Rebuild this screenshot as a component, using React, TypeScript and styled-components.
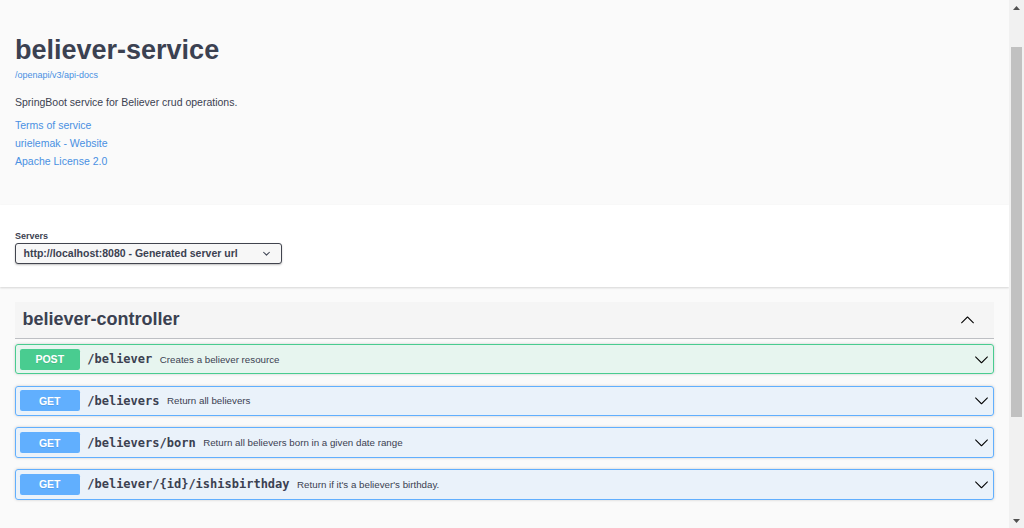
import React from 'react';
import styled, { createGlobalStyle } from 'styled-components';

const GlobalStyle = createGlobalStyle`
  html, body { margin: 0; padding: 0; background: #fafafa; }
  body { font-family: "Liberation Sans", Arial, sans-serif; color: #3b4151; }
  * { box-sizing: border-box; }
`;

const SANS = `"Liberation Sans", Arial, sans-serif`;
const MONO = `"DejaVu Sans Mono", "Liberation Mono", monospace`;

const Viewport = styled.div`
  height: 100vh;
  display: flex;
  overflow: hidden;
  font-family: ${SANS};
`;

const Main = styled.main`
  flex: 1;
  min-width: 0;
  overflow: hidden;
  background: #fafafa;
`;

const Wrapper = styled.div`
  padding: 0 15px;
`;

const Info = styled.section`
  padding: 35px 0 34.6px;
`;

const Title = styled.h2`
  margin: 0;
  font-size: 27px;
  line-height: 31px;
  font-weight: 700;
  color: #3b4151;
`;

const UrlLink = styled.a`
  display: block;
  margin-top: 3.9px;
  font-size: 9px;
  line-height: 11px;
  color: #4990e2;
  text-decoration: none;
`;

const Description = styled.p`
  margin: 12.5px 0 0;
  font-size: 10.5px;
  line-height: 18px;
  color: #3b4151;
`;

const InfoLinks = styled.div`
  margin-top: 5px;
  display: flex;
  flex-direction: column;
`;

const InfoLink = styled.a`
  font-size: 10.5px;
  line-height: 18px;
  color: #4990e2;
  text-decoration: none;
  align-self: flex-start;
`;

const SchemeContainer = styled.section`
  background: #fff;
  box-shadow: 0 1px 2px 0 rgba(0, 0, 0, 0.15);
  padding: 26.4px 0 22.6px;
  margin-bottom: 15px;
`;

const ServersLabel = styled.span`
  display: block;
  font-size: 9px;
  line-height: 10px;
  font-weight: 700;
  color: #3b4151;
`;

const SelectBox = styled.div`
  margin-top: 2px;
  width: 267px;
  height: 21px;
  border: 1.5px solid #41444e;
  border-radius: 3px;
  background: #f7f7f7;
  box-shadow: 0 1px 2px 0 rgba(0, 0, 0, 0.25);
  padding: 0 7.5px 1px;
  display: flex;
  align-items: center;
  justify-content: space-between;
  font-size: 10.5px;
  font-weight: 700;
  color: #3b4151;
`;

const TagSection = styled.section``;

const TagHeader = styled.div`
  display: flex;
  align-items: center;
  justify-content: space-between;
  padding: 7.5px 15px 7.5px 7.5px;
  margin-bottom: 5px;
  background: #f5f5f5;
  border-bottom: 1px solid rgba(59, 65, 81, 0.3);
`;

const TagTitle = styled.h3`
  margin: 0;
  font-size: 18px;
  font-weight: 700;
  color: #3b4151;
`;

const ExpandButton = styled.button`
  border: none;
  background: none;
  padding: 0 4.5px;
  display: flex;
  align-items: center;
`;

const Opblock = styled.div<{ $color: string; $tint: string }>`
  margin-bottom: 11.25px;
  border: 1px solid ${(p) => p.$color};
  border-radius: 3px;
  background: ${(p) => p.$tint};
  box-shadow: 0 0 3px rgba(0, 0, 0, 0.19);
`;

const Summary = styled.div`
  display: flex;
  align-items: center;
  padding: 3.75px;
`;

const Method = styled.span<{ $color: string }>`
  min-width: 60px;
  padding: 4.5px 0;
  border-radius: 2.25px;
  background: ${(p) => p.$color};
  color: #fff;
  font-size: 10.5px;
  font-weight: 700;
  text-align: center;
  text-shadow: 0 1px 0 rgba(0, 0, 0, 0.1);
`;

const Path = styled.span`
  padding: 0 7.5px;
  font-family: ${MONO};
  font-size: 12px;
  font-weight: 700;
  color: #3b4151;
`;

const OpDesc = styled.span`
  flex: 1;
  font-size: 9.75px;
  color: #3b4151;
`;

/* Classic window scrollbar (drawn, since the page is shown scrolled) */
const ScrollBar = styled.aside`
  width: 15px;
  flex: none;
  background: #f1f1f1;
  display: flex;
  flex-direction: column;
`;

const ScrollArrow = styled.div`
  height: 15px;
  display: flex;
  align-items: center;
  justify-content: center;
`;

const ScrollTrack = styled.div`
  flex: 1;
  display: flex;
  flex-direction: column;
  padding: 0 2px;
`;

const ScrollThumb = styled.div`
  background: #c1c1c1;
  width: 11px;
`;

const ArrowDown = () => (
  <svg width={15} height={15} viewBox="0 0 20 20" fill="#000" aria-hidden="true">
    <path d="M17.418 6.109c.272-.268.709-.268.979 0s.271.701 0 .969l-7.908 7.83c-.27.268-.707.268-.979 0l-7.908-7.83c-.27-.268-.27-.701 0-.969.271-.268.709-.268.979 0L10 13.25l7.418-7.141z" />
  </svg>
);

const ArrowUp = () => (
  <svg width={15} height={15} viewBox="0 0 20 20" fill="#000" aria-hidden="true">
    <path d="M17.418 14.908c.272.268.709.268.979 0s.271-.701 0-.969l-7.908-7.83c-.27-.268-.707-.268-.979 0l-7.908 7.83c-.27.268-.27.701 0 .969.271.268.709.268.979 0L10 7.767l7.418 7.141z" />
  </svg>
);

const SelectArrow = () => (
  <svg width={15} height={15} viewBox="0 0 20 20" fill="#3b4151" aria-hidden="true">
    <path d="M13.418 7.859a.695.695 0 01.978 0 .68.68 0 010 .969l-3.908 3.83a.697.697 0 01-.979 0l-3.908-3.83a.68.68 0 010-.969.695.695 0 01.978 0L10 11l3.418-3.141z" />
  </svg>
);

const Triangle = ({ up }: { up?: boolean }) => (
  <svg width={7} height={4} viewBox="0 0 7 4" fill="#505050" aria-hidden="true">
    <path d={up ? 'M3.5 0L7 4H0z' : 'M0 0h7L3.5 4z'} />
  </svg>
);

type Op = { method: 'POST' | 'GET'; path: string; desc: string };

const ops: Op[] = [
  { method: 'POST', path: '/believer', desc: 'Creates a believer resource' },
  { method: 'GET', path: '/believers', desc: 'Return all believers' },
  { method: 'GET', path: '/believers/born', desc: 'Return all believers born in a given date range' },
  { method: 'GET', path: '/believer/{id}/ishisbirthday', desc: "Return if it's a believer's birthday." },
];

const palette = {
  POST: { color: '#49cc90', tint: 'rgba(73,204,144,.1)' },
  GET: { color: '#61affe', tint: 'rgba(97,175,254,.1)' },
};

// scroll state of the documented page
const scroll = { top: 45, docHeight: 709, view: 528, track: 498 };

export default function App() {
  const thumbOffset = (scroll.top / scroll.docHeight) * scroll.track;
  const thumbLength = (scroll.view / scroll.docHeight) * scroll.track;

  return (
    <>
      <GlobalStyle />
      <Viewport>
        <Main>
          <Wrapper>
            <Info>
              <Title>believer-service</Title>
              <UrlLink href="#">/openapi/v3/api-docs</UrlLink>
              <Description>SpringBoot service for Believer crud operations.</Description>
              <InfoLinks>
                <InfoLink href="#">Terms of service</InfoLink>
                <InfoLink href="#">urielemak - Website</InfoLink>
                <InfoLink href="#">Apache License 2.0</InfoLink>
              </InfoLinks>
            </Info>
          </Wrapper>
          <SchemeContainer>
            <Wrapper>
              <ServersLabel>Servers</ServersLabel>
              <SelectBox>
                <span>http://localhost:8080 - Generated server url</span>
                <SelectArrow />
              </SelectBox>
            </Wrapper>
          </SchemeContainer>
          <Wrapper>
            <TagSection>
              <TagHeader>
                <TagTitle>believer-controller</TagTitle>
                <ExpandButton>
                  <ArrowUp />
                </ExpandButton>
              </TagHeader>
              {ops.map((op) => (
                <Opblock key={op.path} $color={palette[op.method].color} $tint={palette[op.method].tint}>
                  <Summary>
                    <Method $color={palette[op.method].color}>{op.method}</Method>
                    <Path>{op.path}</Path>
                    <OpDesc>{op.desc}</OpDesc>
                    <ArrowDown />
                  </Summary>
                </Opblock>
              ))}
            </TagSection>
          </Wrapper>
        </Main>
        <ScrollBar>
          <ScrollArrow>
            <Triangle up />
          </ScrollArrow>
          <ScrollTrack>
            <ScrollThumb style={{ marginTop: thumbOffset, height: thumbLength }} />
          </ScrollTrack>
          <ScrollArrow>
            <Triangle />
          </ScrollArrow>
        </ScrollBar>
      </Viewport>
    </>
  );
}
